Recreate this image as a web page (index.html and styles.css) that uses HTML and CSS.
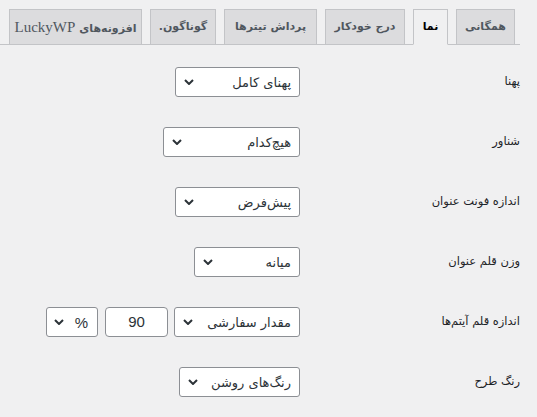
FILE: index.html
```html
<!DOCTYPE html>
<html lang="fa" dir="rtl">
<head>
<meta charset="utf-8">
<link rel="stylesheet" href="styles.css">
</head>
<body>
<div class="wrap">
  <nav class="tabs">
    <a class="tab t1">همگانی</a>
    <a class="tab t2 active">نما</a>
    <a class="tab t3">درج خودکار</a>
    <a class="tab t4">پرداش تیترها</a>
    <a class="tab t5">گوناگون.</a>
    <a class="tab t6">افزونه‌های <span class="latin">LuckyWP</span></a>
  </nav>
  <div class="form">
    <div class="row">
      <div class="th">پهنا</div>
      <div class="td">
        <div class="sel w125"><span>پهنای کامل</span><svg class="chev" viewBox="0 0 10 6"><path d="M1 1 5 5 9 1"/></svg></div>
      </div>
    </div>
    <div class="row">
      <div class="th">شناور</div>
      <div class="td">
        <div class="sel w137"><span>هیچ‌کدام</span><svg class="chev" viewBox="0 0 10 6"><path d="M1 1 5 5 9 1"/></svg></div>
      </div>
    </div>
    <div class="row">
      <div class="th">اندازه فونت عنوان</div>
      <div class="td">
        <div class="sel w125"><span>پیش‌فرض</span><svg class="chev" viewBox="0 0 10 6"><path d="M1 1 5 5 9 1"/></svg></div>
      </div>
    </div>
    <div class="row">
      <div class="th">وزن قلم عنوان</div>
      <div class="td">
        <div class="sel w106"><span>میانه</span><svg class="chev" viewBox="0 0 10 6"><path d="M1 1 5 5 9 1"/></svg></div>
      </div>
    </div>
    <div class="row">
      <div class="th">اندازه قلم آیتم‌ها</div>
      <div class="td">
        <div class="sel w126"><span>مقدار سفارشی</span><svg class="chev" viewBox="0 0 10 6"><path d="M1 1 5 5 9 1"/></svg></div>
        <div class="num">90</div>
        <div class="sel w52 unit"><span>%</span><svg class="chev" viewBox="0 0 10 6"><path d="M1 1 5 5 9 1"/></svg></div>
      </div>
    </div>
    <div class="row">
      <div class="th">رنگ طرح</div>
      <div class="td">
        <div class="sel w121"><span>رنگ‌های روشن</span><svg class="chev" viewBox="0 0 10 6"><path d="M1 1 5 5 9 1"/></svg></div>
      </div>
    </div>
  </div>
</div>
</body>
</html>
```
FILE: styles.css
```css
html, body {
  margin: 0;
  padding: 0;
}
body {
  background: #f0f0f1;
  font-family: "DejaVu Sans", sans-serif;
  color: #1d2327;
  direction: rtl;
}
.wrap {
  margin-right: 17px;
}
.tabs {
  display: flex;
  align-items: flex-end;
  gap: 8px;
  padding-top: 9px;
  padding-right: 5px;
  border-bottom: 1px solid #c3c4c7;
}
.tab {
  display: block;
  box-sizing: border-box;
  height: 35px;
  padding: 5px 0;
  border: 1px solid #c3c4c7;
  border-bottom: none;
  background: #dcdcde;
  color: #50575e;
  font-size: 11px;
  font-weight: bold;
  line-height: 24px;
  text-align: center;
  white-space: nowrap;
}
.t1 { width: 59px; }
.t2 { width: 35px; }
.t3 { width: 80px; }
.t4 { width: 93px; }
.t5 { width: 66px; }
.t6 { width: 133px; }
.tab.active {
  height: 36px;
  margin-bottom: -1px;
  background: #f0f0f1;
  border-bottom: 1px solid #f0f0f1;
  color: #000;
}
.latin {
  font-family: "Liberation Serif", serif;
  font-size: 15px;
  font-weight: normal;
}
.form {
  margin-top: 7px;
}
.row {
  display: grid;
  grid-template-columns: 210px auto;
}
.th {
  padding: 20px 0 20px 10px;
  font-size: 11.5px;
  line-height: 18px;
  color: #1d2327;
}
.td {
  padding: 15px 10px;
  display: flex;
  align-items: center;
}
.sel {
  box-sizing: border-box;
  height: 30px;
  display: flex;
  align-items: center;
  justify-content: space-between;
  border: 1px solid #8c8f94;
  border-radius: 3px;
  background: #fff;
  padding: 0 8px 0 8px;
  font-size: 13px;
  color: #2c3338;
  white-space: nowrap;
}
.chev {
  width: 10px;
  height: 6px;
  fill: none;
  stroke: #2c3338;
  stroke-width: 2;
}
.w125 { width: 125px; }
.w137 { width: 137px; }
.w106 { width: 106px; }
.w126 { width: 126px; }
.w121 { width: 121px; }
.w52 { width: 52px; }
.unit {
  margin-right: 7px;
  padding: 0 9px 0 7px;
  font-family: "Liberation Sans", sans-serif;
  font-size: 15px;
}
.num {
  box-sizing: border-box;
  width: 63px;
  height: 30px;
  margin-right: 6px;
  border: 1px solid #8c8f94;
  border-radius: 4px;
  background: #fff;
  font-family: "Liberation Sans", sans-serif;
  font-size: 15px;
  line-height: 28px;
  text-align: center;
  color: #2c3338;
}
```
